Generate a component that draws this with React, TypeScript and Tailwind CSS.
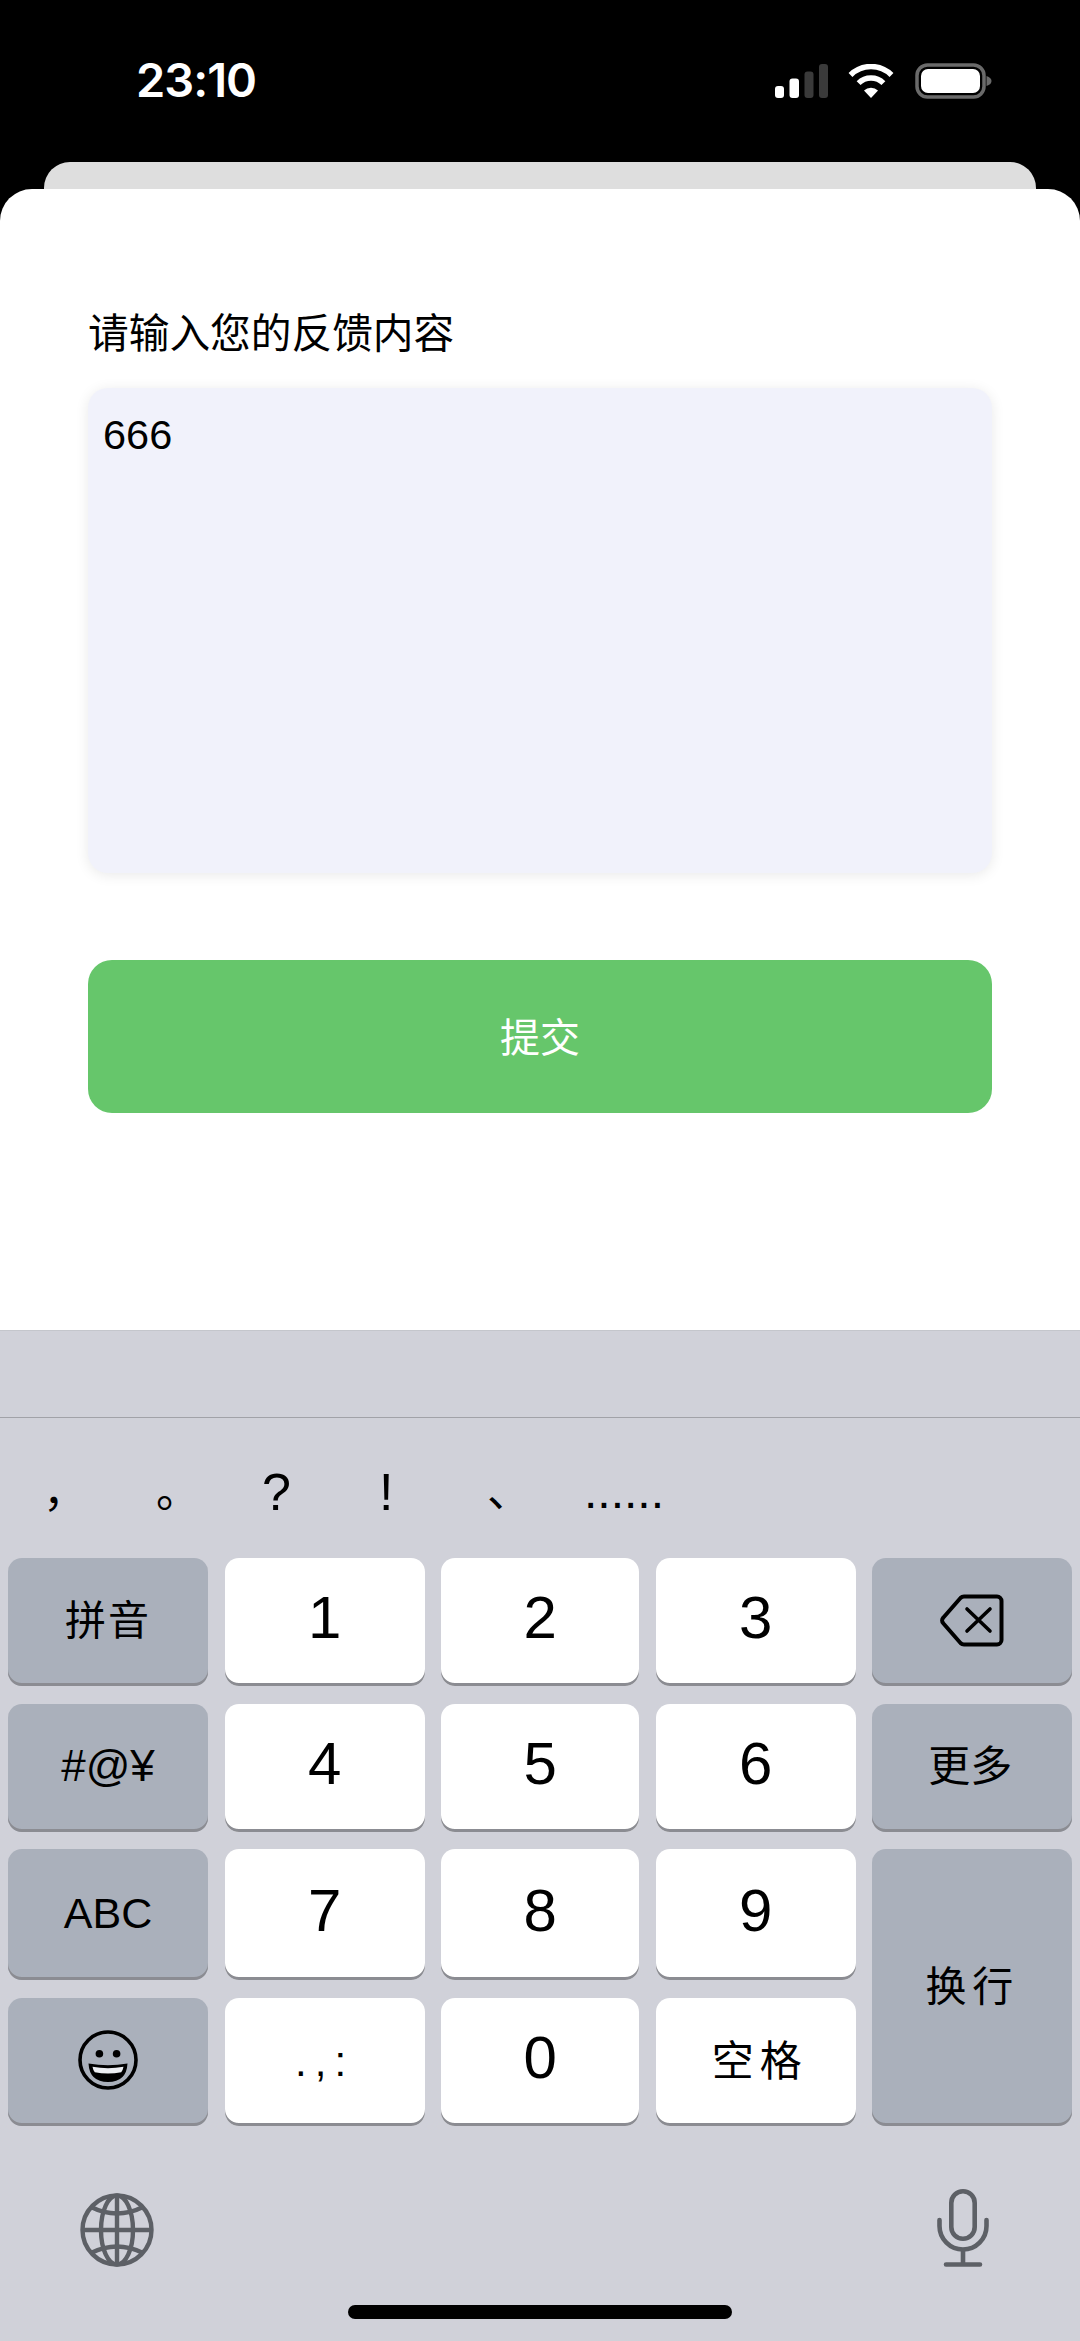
import React from "react";

const SANS = "font-['Liberation_Sans','Noto_Sans_CJK_SC',sans-serif]";

function Signal() {
  return (
    <svg width="53" height="34" viewBox="0 0 53 34" className="block">
      <rect x="0" y="22" width="9" height="12" rx="3" fill="#fff" />
      <rect x="14.5" y="14.5" width="9.5" height="19.5" rx="3" fill="#fff" />
      <rect x="29.5" y="7.5" width="9" height="26.5" rx="3" fill="#3a3a3a" />
      <rect x="44" y="0" width="9" height="34" rx="3" fill="#3a3a3a" />
    </svg>
  );
}

function Wifi() {
  return (
    <svg width="46" height="34" viewBox="0 0 46 34" className="block" fill="none">
      <path d="M2.5 11 A29 29 0 0 1 43.5 11" stroke="#fff" strokeWidth="5.5" />
      <path d="M10.6 19.1 A17.5 17.5 0 0 1 35.4 19.1" stroke="#fff" strokeWidth="5.5" />
      <path d="M23 34 L16 26.5 A10 10 0 0 1 30 26.5 Z" fill="#fff" />
    </svg>
  );
}

function Battery() {
  return (
    <svg width="77" height="36" viewBox="0 0 77 36" className="block">
      <rect x="2" y="2" width="67" height="32" rx="10.5" fill="none" stroke="#6a6a6a" strokeWidth="3.5" />
      <rect x="6" y="6" width="59" height="24" rx="7" fill="#fff" />
      <path d="M71.5 13 C75 14 76.5 16 76.5 18 C76.5 20 75 22 71.5 23 Z" fill="#6a6a6a" />
    </svg>
  );
}

function Backspace() {
  return (
    <svg width="64" height="53" viewBox="0 0 64 53" fill="none" stroke="#000" strokeLinejoin="round" strokeLinecap="round">
      <path
        d="M24 2.5 H57 a4.5 4.5 0 0 1 4.5 4.5 V46 a4.5 4.5 0 0 1 -4.5 4.5 H24 a5 5 0 0 1 -3.5 -1.5 L3.2 29.2 a4 4 0 0 1 0 -5.5 L20.5 4 a5 5 0 0 1 3.5 -1.5Z"
        strokeWidth="4"
      />
      <path d="M27 15 L50 37 M50 15 L27 37" strokeWidth="3.6" />
    </svg>
  );
}

function Smile() {
  return (
    <svg width="60" height="60" viewBox="0 0 60 60" fill="none">
      <circle cx="30" cy="30" r="28" stroke="#000" strokeWidth="3.6" />
      <circle cx="21.4" cy="23.7" r="3.8" fill="#000" />
      <circle cx="38.6" cy="23.7" r="3.8" fill="#000" />
      <path d="M10.5 33.5 Q30 37 49.5 33.5 Q48.5 52 30 52 Q11.5 52 10.5 33.5Z" fill="#000" />
      <path d="M14.5 36.8 Q30 39.6 45.5 36.8 Q45 40 43.2 42.2 Q30 44.8 16.8 42.2 Q15 40 14.5 36.8Z" fill="#eceef2" />
    </svg>
  );
}

function Globe() {
  return (
    <svg width="74" height="74" viewBox="0 0 74 74" fill="none" stroke="#5d6066" strokeWidth="4.4" className="block">
      <circle cx="37" cy="37" r="34.5" />
      <ellipse cx="37" cy="37" rx="16" ry="34.5" />
      <path d="M37 2.5 V71.5 M2.5 37 H71.5" />
      <path d="M11 14 Q37 27 63 14" />
      <path d="M11 60 Q37 47 63 60" />
    </svg>
  );
}

function Mic() {
  return (
    <svg width="52" height="78" viewBox="0 0 52 78" fill="none" stroke="#5d6066" strokeWidth="4.6" strokeLinecap="round" className="block">
      <rect x="14.3" y="2.3" width="23.4" height="47.5" rx="11.7" />
      <path d="M2.5 31 V37 A23.5 23.5 0 0 0 49.5 37 V31" />
      <path d="M26 61 V75 M9 75.5 H43" />
    </svg>
  );
}

function Key({
  children,
  dark,
  className = "",
}: {
  children: React.ReactNode;
  dark?: boolean;
  className?: string;
}) {
  return (
    <div
      className={`flex items-center justify-center rounded-[14px] pb-[3px] text-black shadow-[inset_0_-3px_0_#8b8c92] ${
        dark ? "bg-[#aab0bb]" : "bg-white"
      } ${className}`}
    >
      {children}
    </div>
  );
}

function Digit({ n }: { n: string }) {
  return (
    <Key>
      <span className="mb-[5px] text-[60px] leading-none">{n}</span>
    </Key>
  );
}

export default function App() {
  return (
    <div className={`relative flex h-[2341px] w-[1080px] flex-col overflow-hidden bg-black ${SANS}`}>
      {/* status bar */}
      <div className="flex h-[162px] items-start justify-between pt-[62px] pl-[136px] pr-[88px]">
        <span className="font-['Inter',sans-serif] text-[47px] leading-[36px] font-semibold tracking-[-1px] text-white">
          23:10
        </span>
        <div className="flex items-center pt-[1px]">
          <Signal />
          <div className="ml-[20px]">
            <Wifi />
          </div>
          <div className="ml-[21px]">
            <Battery />
          </div>
        </div>
      </div>

      {/* sheet stack */}
      <div className="mx-[44px] h-[27px] rounded-t-[26px] bg-[#dedede]" />
      <div className="h-[1141px] rounded-t-[32px] bg-white px-[88px] pt-[115px]">
        <div className="h-[60px] text-[40.7px] leading-[60px] text-black">请输入您的反馈内容</div>
        <div className="mt-[24px] h-[485px] rounded-[20px] bg-[#f1f2fb] pt-[23px] pl-[15px] text-[41.5px] leading-[48px] text-black shadow-[0_2px_14px_rgba(0,0,0,0.09)]">
          666
        </div>
        <div className="mt-[87px] flex h-[153px] items-center justify-center rounded-[24px] bg-[#66c66b] pt-[3px] text-[40px] text-white">
          提交
        </div>
      </div>

      {/* keyboard */}
      <div className="relative flex h-[1011px] flex-col bg-[#d0d1d9]">
        <div className="h-[88px] border-t border-b border-t-[#c4c6cc] border-b-[#a1a2a8]" />
        <div className="flex h-[140px] pt-[44px] text-[44px] leading-[60px] text-black">
          <span className="w-[110px] pl-[43px]">，</span>
          <span className="w-[111px] pl-[46px]">。</span>
          <span className="w-[110px] pl-[41px] text-[52px]">?</span>
          <span className="w-[108px] pl-[48px] text-[52px]">!</span>
          <span className="w-[95px] pl-[48px]">、</span>
          <span className="ml-[50px] text-[48px]">......</span>
        </div>

        <div className="grid grid-cols-[200px_200px_198px_200px_200px] grid-rows-[128px_128px_131px_128px] gap-x-[16.6px] gap-y-[17.5px] pl-[8px]">
          <Key dark>
            <span className="pt-[2px] text-[41px] tracking-[2px]">拼音</span>
          </Key>
          <Digit n="1" />
          <Digit n="2" />
          <Digit n="3" />
          <Key dark>
            <Backspace />
          </Key>

          <Key dark>
            <span className="text-[44px] leading-none">#@¥</span>
          </Key>
          <Digit n="4" />
          <Digit n="5" />
          <Digit n="6" />
          <Key dark>
            <span className="pr-[4px] text-[42px]">更多</span>
          </Key>

          <Key dark>
            <span className="text-[43px]">ABC</span>
          </Key>
          <Digit n="7" />
          <Digit n="8" />
          <Digit n="9" />
          <Key dark className="row-span-2">
            <span className="pt-[4px] text-[41px] tracking-[6px]">换行</span>
          </Key>

          <Key dark>
            <Smile />
          </Key>
          <Key>
            <span className="pt-[3px] text-[42px] tracking-[8px]">.,:</span>
          </Key>
          <Digit n="0" />
          <Key>
            <span className="pt-[2px] pl-[8px] text-[42px] tracking-[6px]">空格</span>
          </Key>
        </div>

        <div className="flex items-end justify-between pt-[63px] pl-[80px] pr-[91px]">
          <Globe />
          <Mic />
        </div>
        <div className="absolute bottom-[22px] left-[348px] h-[14px] w-[384px] rounded-full bg-black" />
      </div>
    </div>
  );
}
